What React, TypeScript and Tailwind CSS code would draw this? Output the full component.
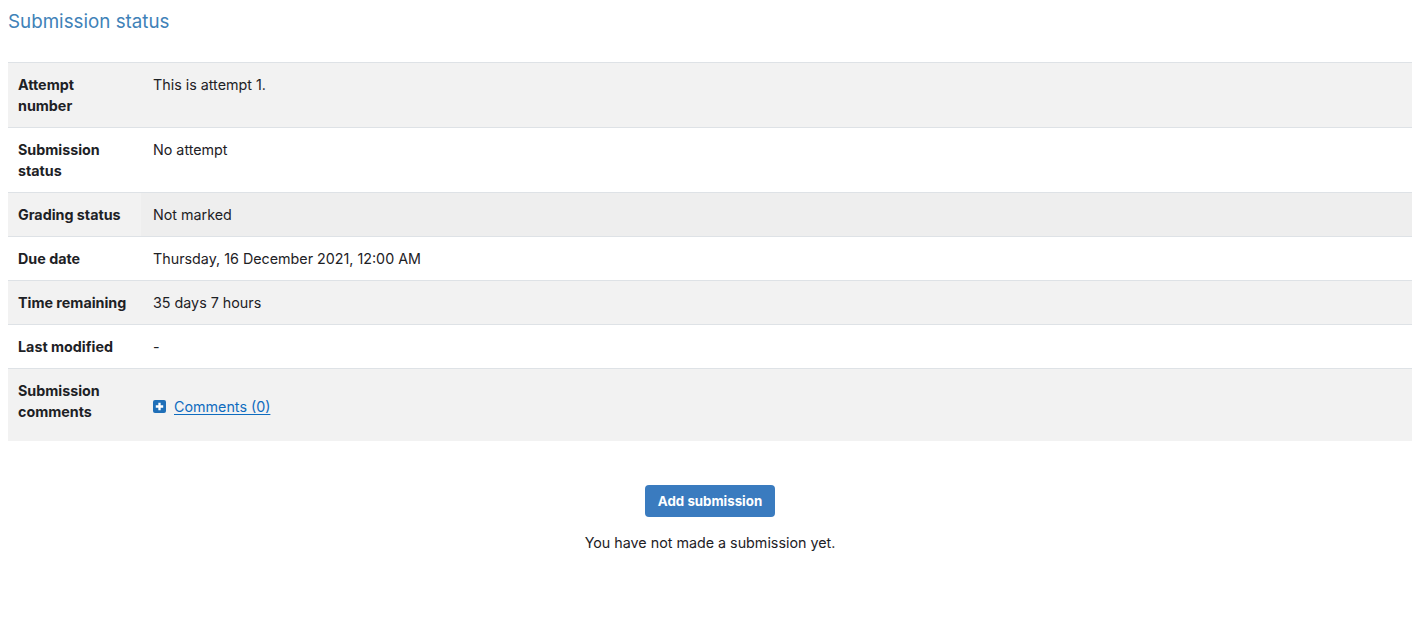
import React from 'react';

const rows: { label: string; value: React.ReactNode; shade: boolean; tall?: boolean; dark?: boolean }[] = [
  { label: 'Attempt number', value: 'This is attempt 1.', shade: true },
  { label: 'Submission status', value: 'No attempt', shade: false },
  { label: 'Grading status', value: 'Not marked', shade: true, dark: true },
  { label: 'Due date', value: 'Thursday, 16 December 2021, 12:00 AM', shade: false },
  { label: 'Time remaining', value: '35 days 7 hours', shade: true },
  { label: 'Last modified', value: '-', shade: false },
  { label: 'Submission comments', value: null, shade: true, tall: true },
];

const PlusSquare = () => (
  <svg width="13" height="13" viewBox="0 0 13 13" className="shrink-0">
    <rect x="0" y="0" width="13" height="13" rx="2" fill="#1f6fb8" />
    <path d="M6.5 2.8v7.4M2.8 6.5h7.4" stroke="#fff" strokeWidth="2.3" />
  </svg>
);

const App: React.FC = () => {
  return (
    <div className="min-h-screen bg-white text-[#1d2125] text-[14.3px] leading-[21px]" style={{ fontFamily: 'Inter, "Liberation Sans", sans-serif' }}>
      <div className="px-2 pt-[10px]">
        <h2 className="text-[18.8px] leading-6 text-[#3f82b8] font-normal">Submission status</h2>

        <div className="mt-[28px] mr-[5px] border-t border-[#dee2e6]">
          {rows.map(r => (
            <div
              key={r.label}
              className={`grid grid-cols-[133px_1fr] ${r.tall ? '' : 'border-b border-[#dee2e6]'} ${r.shade ? 'bg-[#f2f2f2]' : 'bg-white'}`}
            >
              <div className="pl-[10px] pr-3 py-[11px] font-bold">
                {r.label.length > 14 ? (
                  <>
                    {r.label.split(' ')[0]}
                    <br />
                    {r.label.split(' ').slice(1).join(' ')}
                  </>
                ) : (
                  r.label
                )}
              </div>
              {r.tall ? (
                <div className="px-3 h-[72px] flex items-center">
                  <a href="#" className="flex items-center gap-[8px] text-[#0f6cbf] underline underline-offset-2 pt-[2px]">
                    <PlusSquare />
                    <span>Comments (0)</span>
                  </a>
                </div>
              ) : (
                <div className={`px-3 py-[11px] ${r.dark ? 'bg-[#eeeeee]' : ''}`}>{r.value}</div>
              )}
            </div>
          ))}
        </div>

        <div className="flex flex-col items-center mt-[44px] mr-[5px]">
          <button className="h-8 px-[13px] rounded bg-[#3a7bbf] text-white text-[13.3px] font-bold">Add submission</button>
          <p className="mt-[15px]">You have not made a submission yet.</p>
        </div>
      </div>
    </div>
  );
};

export default App;
